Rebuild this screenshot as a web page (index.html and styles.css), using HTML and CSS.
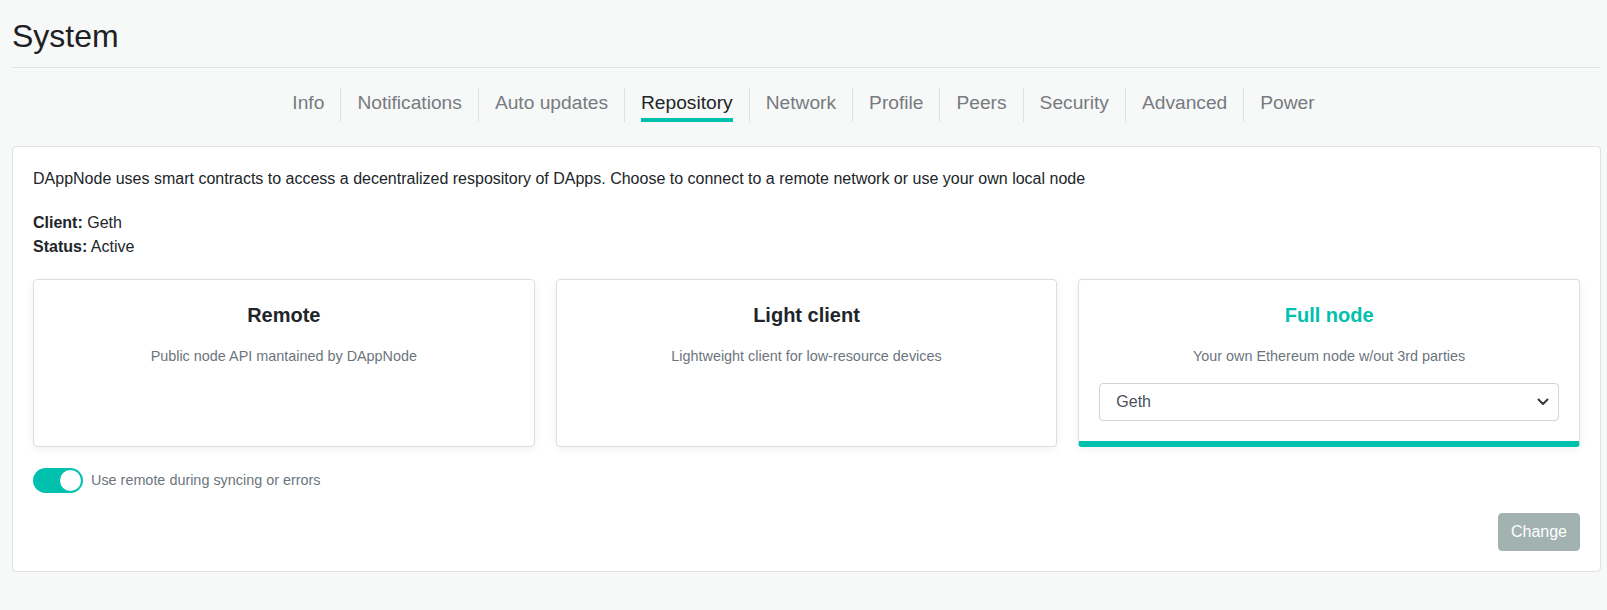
FILE: index.html
```html
<!DOCTYPE html>
<html lang="en">
<head>
<meta charset="utf-8">
<title>System</title>
<link rel="stylesheet" href="styles.css">
</head>
<body>
<div class="page">
  <header class="page-header">
    <h1 class="page-title">System</h1>
  </header>
  <nav class="tabs">
    <div class="tab"><span>Info</span></div>
    <div class="tab"><span>Notifications</span></div>
    <div class="tab"><span>Auto updates</span></div>
    <div class="tab active"><span>Repository</span></div>
    <div class="tab"><span>Network</span></div>
    <div class="tab"><span>Profile</span></div>
    <div class="tab"><span>Peers</span></div>
    <div class="tab"><span>Security</span></div>
    <div class="tab"><span>Advanced</span></div>
    <div class="tab"><span>Power</span></div>
  </nav>
  <section class="main-card">
    <p class="description">DAppNode uses smart contracts to access a decentralized respository of DApps. Choose to connect to a remote network or use your own local node</p>
    <div class="status">
      <div><b>Client:</b> Geth</div>
      <div><b>Status:</b> Active</div>
    </div>
    <div class="options">
      <div class="option">
        <div class="option-title">Remote</div>
        <div class="option-desc">Public node API mantained by DAppNode</div>
      </div>
      <div class="option">
        <div class="option-title">Light client</div>
        <div class="option-desc">Lightweight client for low-resource devices</div>
      </div>
      <div class="option selected">
        <div class="option-title">Full node</div>
        <div class="option-desc">Your own Ethereum node w/out 3rd parties</div>
        <div class="select-wrap">
          <select class="select">
            <option>Geth</option>
          </select>
          <svg class="chevron" width="12" height="8" viewBox="0 0 12 8"><path d="M1.5 1.5 L6 6 L10.5 1.5" fill="none" stroke="#343a40" stroke-width="2" stroke-linecap="round" stroke-linejoin="round"/></svg>
        </div>
      </div>
    </div>
    <div class="toggle-row">
      <span class="switch"><span class="knob"></span></span>
      <span class="toggle-label">Use remote during syncing or errors</span>
    </div>
    <div class="actions">
      <button class="btn" type="button">Change</button>
    </div>
  </section>
</div>
</body>
</html>
```
FILE: styles.css
```css
html, body {
  margin: 0;
  padding: 0;
  background: #f7f8f8;
  font-family: "Liberation Sans", Arial, sans-serif;
  color: #212529;
}

.page {
  padding: 0 6px 0 12px;
}

.page-header {
  padding-top: 17px;
  padding-bottom: 12px;
  border-bottom: 1px solid #e2e4e4;
}

.page-title {
  margin: 0;
  font-size: 32px;
  line-height: 38px;
  font-weight: 400;
  color: #1d2024;
}

.tabs {
  display: flex;
  justify-content: center;
  margin-top: 20px;
  padding-right: 6px;
}

.tab {
  height: 34px;
  padding: 0 16px;
  border-left: 1px solid #e0e2e2;
  font-size: 19.2px;
  color: #777b7f;
}

.tab:first-child {
  border-left: none;
}

.tab span {
  display: block;
  line-height: 30px;
  white-space: nowrap;
}

.tab.active span {
  color: #212529;
  border-bottom: 4px solid #00c1ad;
}

.main-card {
  margin-top: 24px;
  background: #fff;
  border: 1px solid #dfe1e1;
  border-radius: 4px;
  padding: 20px;
}

.description {
  margin: 0 0 20px;
  font-size: 16px;
  line-height: 24px;
}

.status {
  font-size: 16px;
  line-height: 24px;
}

.options {
  margin-top: 20px;
  display: grid;
  grid-template-columns: 1fr 1fr 1fr;
  gap: 21px;
}

.option {
  background: #fff;
  border: 1px solid #dcdfdf;
  border-radius: 4px;
  box-shadow: 0 2px 8px rgba(0, 0, 0, 0.06);
  padding: 23px 20px 20px;
  text-align: center;
}

.option.selected {
  border-bottom: 6px solid #00c1ad;
  padding-bottom: 20px;
}

.option-title {
  font-size: 20px;
  line-height: 24px;
  font-weight: 700;
  color: #212529;
}

.option.selected .option-title {
  color: #00c1ad;
}

.option-desc {
  margin-top: 19px;
  font-size: 14.4px;
  line-height: 21.6px;
  color: #6c757d;
}

.select-wrap {
  position: relative;
  margin-top: 15px;
}

.select {
  display: block;
  width: 100%;
  height: 38px;
  appearance: none;
  -webkit-appearance: none;
  background: #fff;
  border: 1px solid #ced4da;
  border-radius: 4px;
  padding: 0 32px 0 16px;
  font-family: "Liberation Sans", Arial, sans-serif;
  font-size: 16px;
  color: #495057;
  text-align: left;
}

.chevron {
  position: absolute;
  right: 10px;
  top: 15px;
  pointer-events: none;
}

.toggle-row {
  margin-top: 21px;
  display: flex;
  align-items: center;
  height: 25px;
}

.switch {
  position: relative;
  width: 50px;
  height: 25px;
  border-radius: 13px;
  background: #00c1ad;
  flex: none;
}

.knob {
  position: absolute;
  right: 2px;
  top: 2px;
  width: 21px;
  height: 21px;
  border-radius: 50%;
  background: #fff;
}

.toggle-label {
  margin-left: 8px;
  font-size: 14.4px;
  color: #6c757d;
}

.actions {
  margin-top: 20px;
  display: flex;
  justify-content: flex-end;
}

.btn {
  height: 38px;
  padding: 0 12px;
  border: 1px solid #a2b2b0;
  border-radius: 4px;
  background: #a2b2b0;
  color: #fff;
  font-family: "Liberation Sans", Arial, sans-serif;
  font-size: 16px;
}
```
